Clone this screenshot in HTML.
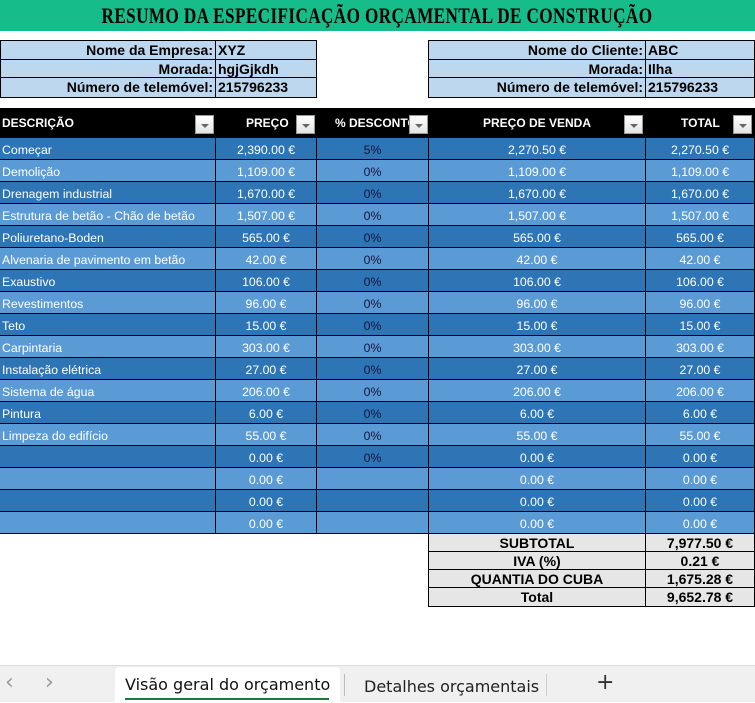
<!DOCTYPE html>
<html><head><meta charset="utf-8"><style>
*{margin:0;padding:0;box-sizing:border-box}
body{width:755px;height:702px;background:#fff;position:relative;overflow:hidden;font-family:"Liberation Sans",Arial,sans-serif}
.a{position:absolute}
.title{left:0;top:0;width:755px;height:31px;background:#16bc8a}
.title span{position:absolute;left:377px;top:3px;transform:translateX(-50%) scaleX(0.78);white-space:nowrap;font-family:"Liberation Serif",serif;font-weight:bold;font-size:22px;color:#000;letter-spacing:0.5px}
.info{border:1px solid #000;background:#bdd7ee;font-size:14px;font-weight:bold;color:#000}
.info div{height:18.5px;line-height:19px;border-bottom:1px solid #000;display:flex}
.info div:last-child{border-bottom:none}
.info .l{text-align:right;border-right:1px solid #000;padding-right:2px}
.info .v{padding-left:2px}
.grid{position:absolute;left:0;top:108px;width:755px}
.r{display:flex;height:22px;border-bottom:1px solid #000}
.r>div{height:100%;border-left:1px solid #000;font-size:12.3px;color:#fff;text-align:center;white-space:nowrap;overflow:hidden;line-height:25px;padding:0 2px;position:relative}
.r>div:nth-child(1){width:215px;text-align:left;border-left:none}
.r>div:nth-child(2){width:101px}
.r>div:nth-child(3){width:112px}
.r>div:nth-child(4){width:217px}
.r>div:nth-child(5){width:110px;border-right:1px solid #000}
.r.h{height:30px;background:#000;border-bottom:none}
.r.h>div{font-weight:bold;font-size:12px;line-height:30px;overflow:visible}
.r.d{background:#2e75b6}
.r.l{background:#5b9bd5}
.p{color:#14143a!important}
.dd{position:absolute;top:7px;width:19px;height:19px;background:linear-gradient(#fff,#e4e4e4);border:1px solid #999;z-index:2}
.dd:after{content:"";position:absolute;left:5px;top:8px;border-left:4px solid transparent;border-right:4px solid transparent;border-top:4px solid #666}
.sum{left:428px;top:534px;width:327px;border:1px solid #000;border-top:none;background:#e7e6e6;font-weight:bold;font-size:14px;color:#000}
.sum div{display:flex;height:18px;line-height:18px;border-bottom:1px solid #000}
.sum div:last-child{border-bottom:none}
.sum span:first-child{width:217px;text-align:center;border-right:1px solid #000}
.sum span:last-child{flex:1;text-align:center}
.tabs{left:0;top:665px;width:755px;height:37px;background:#f0f0f0;border-top:1px solid #ddd;font-family:"DejaVu Sans",sans-serif}
</style></head><body>
<div class="a title"><span>RESUMO DA ESPECIFICAÇÃO ORÇAMENTAL DE CONSTRUÇÃO</span></div>

<div class="a info" style="left:0;top:40px;width:317px">
<div><span class="l" style="width:215px">Nome da Empresa:</span><span class="v">XYZ</span></div>
<div><span class="l" style="width:215px">Morada:</span><span class="v">hgjGjkdh</span></div>
<div><span class="l" style="width:215px">Número de telemóvel:</span><span class="v">215796233</span></div>
</div>
<div class="a info" style="left:428px;top:40px;width:327px">
<div><span class="l" style="width:217px">Nome do Cliente:</span><span class="v">ABC</span></div>
<div><span class="l" style="width:217px">Morada:</span><span class="v">Ilha</span></div>
<div><span class="l" style="width:217px">Número de telemóvel:</span><span class="v">215796233</span></div>
</div>

<div class="grid">
<div class="r h"><div>DESCRIÇÃO<span class="dd" style="left:195px"></span></div><div style="text-align:left;padding-left:30px">PREÇO<span class="dd" style="left:80px"></span></div><div style="text-align:left;padding-left:18px">% DESCONTO<span class="dd" style="left:92px"></span></div><div>PREÇO DE VENDA<span class="dd" style="left:195px"></span></div><div style="text-align:left;padding-left:35px">TOTAL<span class="dd" style="left:87px"></span></div></div>
<div class="r d"><div>Começar</div><div>2,390.00 €</div><div class="p">5%</div><div>2,270.50 €</div><div>2,270.50 €</div></div>
<div class="r l"><div>Demolição</div><div>1,109.00 €</div><div class="p">0%</div><div>1,109.00 €</div><div>1,109.00 €</div></div>
<div class="r d"><div>Drenagem industrial</div><div>1,670.00 €</div><div class="p">0%</div><div>1,670.00 €</div><div>1,670.00 €</div></div>
<div class="r l"><div>Estrutura de betão - Chão de betão</div><div>1,507.00 €</div><div class="p">0%</div><div>1,507.00 €</div><div>1,507.00 €</div></div>
<div class="r d"><div>Poliuretano-Boden</div><div>565.00 €</div><div class="p">0%</div><div>565.00 €</div><div>565.00 €</div></div>
<div class="r l"><div>Alvenaria de pavimento em betão</div><div>42.00 €</div><div class="p">0%</div><div>42.00 €</div><div>42.00 €</div></div>
<div class="r d"><div>Exaustivo</div><div>106.00 €</div><div class="p">0%</div><div>106.00 €</div><div>106.00 €</div></div>
<div class="r l"><div>Revestimentos</div><div>96.00 €</div><div class="p">0%</div><div>96.00 €</div><div>96.00 €</div></div>
<div class="r d"><div>Teto</div><div>15.00 €</div><div class="p">0%</div><div>15.00 €</div><div>15.00 €</div></div>
<div class="r l"><div>Carpintaria</div><div>303.00 €</div><div class="p">0%</div><div>303.00 €</div><div>303.00 €</div></div>
<div class="r d"><div>Instalação elétrica</div><div>27.00 €</div><div class="p">0%</div><div>27.00 €</div><div>27.00 €</div></div>
<div class="r l"><div>Sistema de água</div><div>206.00 €</div><div class="p">0%</div><div>206.00 €</div><div>206.00 €</div></div>
<div class="r d"><div>Pintura</div><div>6.00 €</div><div class="p">0%</div><div>6.00 €</div><div>6.00 €</div></div>
<div class="r l"><div>Limpeza do edifício</div><div>55.00 €</div><div class="p">0%</div><div>55.00 €</div><div>55.00 €</div></div>
<div class="r d"><div></div><div>0.00 €</div><div class="p">0%</div><div>0.00 €</div><div>0.00 €</div></div>
<div class="r l"><div></div><div>0.00 €</div><div></div><div>0.00 €</div><div>0.00 €</div></div>
<div class="r d"><div></div><div>0.00 €</div><div></div><div>0.00 €</div><div>0.00 €</div></div>
<div class="r l"><div></div><div>0.00 €</div><div></div><div>0.00 €</div><div>0.00 €</div></div>
</div>

<div class="a sum">
<div><span>SUBTOTAL</span><span>7,977.50 €</span></div>
<div><span>IVA (%)</span><span>0.21 €</span></div>
<div><span>QUANTIA DO CUBA</span><span>1,675.28 €</span></div>
<div><span>Total</span><span>9,652.78 €</span></div>
</div>

<div class="a tabs">
<span class="a" style="left:5px;top:4px;color:#999;font-size:22px">&lsaquo;</span>
<span class="a" style="left:45px;top:4px;color:#999;font-size:22px">&rsaquo;</span>
<div class="a" style="left:115px;top:1px;width:225px;height:36px;background:#fff;border-radius:4px 4px 0 0"></div>
<span class="a" style="left:125px;top:9px;font-size:16px;color:#111">Visão geral do orçamento</span>
<div class="a" style="left:125px;top:32px;width:204px;height:2px;background:#1a7a3e"></div>
<div class="a" style="left:344px;top:8px;width:1px;height:22px;background:#bbb"></div>
<span class="a" style="left:364px;top:11px;font-size:16px;color:#222">Detalhes orçamentais</span>
<div class="a" style="left:546px;top:8px;width:1px;height:22px;background:#ccc"></div>
<span class="a" style="left:596px;top:4px;font-size:22px;color:#333">+</span>
</div>
</body></html>
